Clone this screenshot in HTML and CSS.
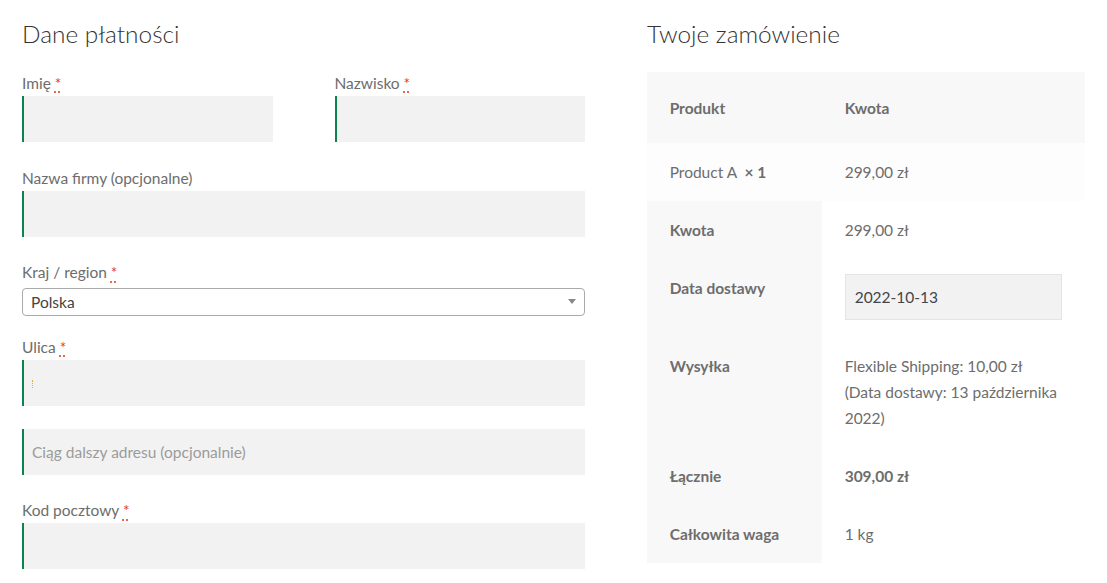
FILE: index.html
```html
<!DOCTYPE html>
<html lang="pl">
<head>
<meta charset="utf-8">
<title>Zamówienie</title>
<link rel="stylesheet" href="styles.css">
</head>
<body>
<div class="page">
  <section class="billing">
    <h3 class="title">Dane płatności</h3>
    <div class="pair">
      <div class="form-row">
        <label>Imię <abbr class="req">*</abbr></label>
        <div class="field valid"></div>
      </div>
      <div class="form-row">
        <label>Nazwisko <abbr class="req">*</abbr></label>
        <div class="field valid"></div>
      </div>
    </div>
    <div class="form-row">
      <label>Nazwa firmy (opcjonalne)</label>
      <div class="field valid"></div>
    </div>
    <div class="form-row country">
      <label>Kraj / region <abbr class="req">*</abbr></label>
      <div class="select">
        <span class="select-text">Polska</span>
        <span class="select-arrow"></span>
      </div>
    </div>
    <div class="form-row">
      <label>Ulica <abbr class="req">*</abbr></label>
      <div class="field valid"><span class="caret"></span></div>
    </div>
    <div class="form-row">
      <div class="field valid"><span class="placeholder">Ciąg dalszy adresu (opcjonalnie)</span></div>
    </div>
    <div class="form-row">
      <label>Kod pocztowy <abbr class="req">*</abbr></label>
      <div class="field valid"></div>
    </div>
  </section>
  <section class="order">
    <h3 class="title">Twoje zamówienie</h3>
    <table class="review">
      <colgroup><col class="c1"><col class="c2"></colgroup>
      <thead>
        <tr><th>Produkt</th><th>Kwota</th></tr>
      </thead>
      <tbody>
        <tr><td>Product A&nbsp; <strong>×&nbsp;1</strong></td><td>299,00 zł</td></tr>
      </tbody>
      <tfoot>
        <tr><th>Kwota</th><td>299,00 zł</td></tr>
        <tr><th>Data dostawy</th><td><div class="date">2022-10-13</div></td></tr>
        <tr><th>Wysyłka</th><td>Flexible Shipping: 10,00 zł<br>(Data dostawy: 13 października 2022)</td></tr>
        <tr><th>Łącznie</th><td><strong>309,00 zł</strong></td></tr>
        <tr><th>Całkowita waga</th><td>1 kg</td></tr>
      </tfoot>
    </table>
  </section>
</div>
</body>
</html>
```

FILE: styles.css
```css
* { box-sizing: border-box; }
html, body { margin: 0; padding: 0; background: #fff; }
body {
  font-family: Lato, "Source Sans Pro", "Liberation Sans", sans-serif;
  font-size: 15.5px;
  line-height: 26px;
  color: #6d6d6d;
}
.page {
  display: flex;
  gap: 62px;
  padding: 0 22px;
}
.billing { width: 563px; flex: none; }
.order { width: 438px; flex: none; }
.title {
  margin: 18px 0 20px;
  font-size: 24.4px;
  line-height: 32px;
  font-weight: 300;
  color: #333;
}
.order .title { margin-bottom: 22px; }
.pair {
  display: flex;
  gap: 62px;
}
.pair .form-row { flex: 1 1 0; }
.form-row { margin-bottom: 22.65px; }
.form-row label { display: block; }
.req {
  color: #e2401c;
  text-decoration: underline dotted;
  text-underline-offset: 3px;
}
.field {
  position: relative;
  height: 46px;
  background: #f2f2f2;
  box-shadow: inset 2px 0 0 #0f834d;
  padding: 10px 10px;
  display: flex;
  align-items: center;
}
.placeholder { color: #9b9b9b; }
.caret {
  position: absolute;
  left: 10px;
  top: 20px;
  width: 1px;
  height: 8px;
  border-left: 1px dotted #f5a623;
}
.country { margin-bottom: 18px; }
.select {
  margin-top: 2.7px;
  height: 28px;
  border: 1px solid #aaa;
  border-radius: 4px;
  display: flex;
  align-items: center;
  justify-content: space-between;
  padding: 0 8px 0 8px;
  color: #444;
}
.select-arrow {
  width: 0; height: 0;
  border-style: solid;
  border-width: 5px 4px 0 4px;
  border-color: #888 transparent transparent transparent;
}
.review {
  width: 100%;
  table-layout: fixed;
  border-collapse: collapse;
}
.review col.c1 { width: 175px; }
.review th, .review td {
  text-align: left;
  vertical-align: top;
  padding: 16px 22.65px;
}
.review th { font-weight: 700; }
.review thead th {
  background: #f8f8f8;
  padding-top: 22.65px;
  padding-bottom: 22.65px;
}
.review tbody td { background: #fdfdfd; }
.review tfoot th { background: #f8f8f8; }
.review tfoot td { background: #fff; }
.review strong { font-weight: 700; }
.date {
  height: 46px;
  margin-top: -1px;
  margin-bottom: 1px;
  background: #f2f2f2;
  border: 1px solid #e4e4e4;
  color: #43454b;
  padding: 0 9px;
  display: flex;
  align-items: center;
}
```
